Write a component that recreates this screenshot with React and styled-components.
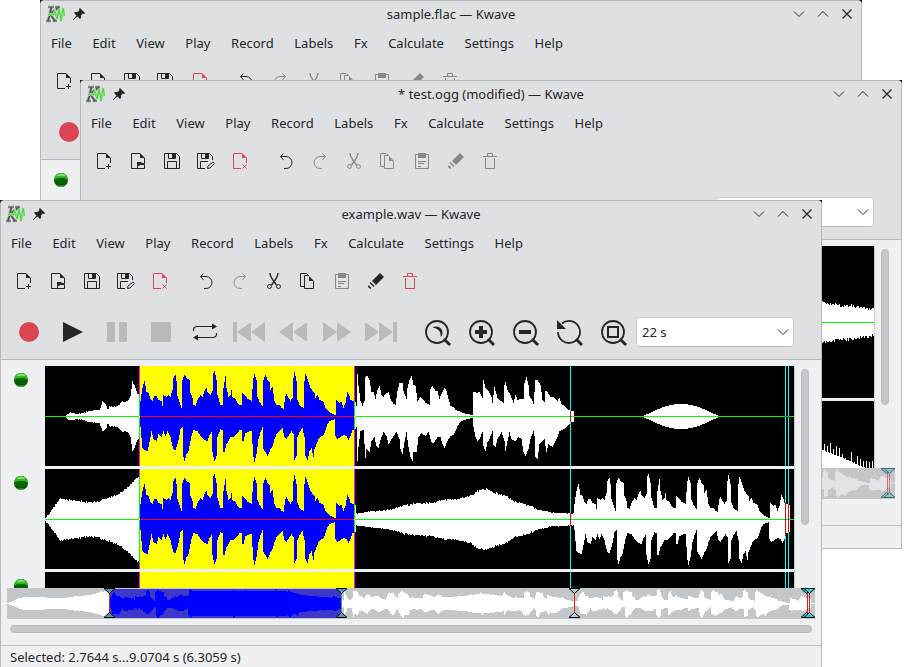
import React from "react";
import styled, { createGlobalStyle } from "styled-components";

const GlobalStyle = createGlobalStyle`
  * {
    box-sizing: border-box;
  }

  body {
    margin: 0;
    background: #ffffff;
    color: #232629;
    font-family: "Noto Sans", sans-serif;
    font-size: 13px;
    overflow: hidden;
  }

  svg {
    display: block;
  }
`;

/* ---------- window frame ---------- */

const Desktop = styled.main`
  position: relative;
  height: 100vh;
  overflow: hidden;
`;

const Window = styled.section`
  position: absolute;
  left: ${(props) => props.$x}px;
  top: ${(props) => props.$y}px;
  width: calc(100% - 84px);
  background: #17191b;
`;

const Frame = styled.div`
  border: 1px solid #b7b8ba;
  border-radius: 4px 4px 0 0;
  background: #eff0f2;
  overflow: hidden;
`;

const TitleBar = styled.header`
  display: grid;
  grid-template-columns: 80px 1fr 80px;
  align-items: center;
  height: 27px;
  padding-bottom: 2px;
  background: #dfe0e2;
`;

const TitleIcons = styled.div`
  display: flex;
  align-items: center;
  gap: 8px;
  padding-left: 4px;
`;

const Title = styled.h1`
  margin: 0;
  font-size: 13px;
  font-weight: 400;
  line-height: 18px;
  text-align: center;
`;

const TitleButtons = styled.div`
  display: flex;
  justify-content: flex-end;
  padding-right: 2px;
`;

const TitleButton = styled.button`
  display: flex;
  align-items: center;
  justify-content: center;
  width: 24px;
  height: 24px;
  padding: 0;
  border: 0;
  background: none;
  color: #232629;
`;

const MenuBar = styled.nav`
  height: 30px;
  background: #dfe0e2;
`;

const MenuList = styled.div`
  display: flex;
  justify-content: space-between;
  width: 532px;
  height: 100%;
`;

const MenuItem = styled.button`
  padding: 0 10px;
  border: 0;
  background: none;
  color: #232629;
  font: inherit;
  line-height: 18px;
`;

const ToolBar = styled.div`
  display: flex;
  align-items: center;
  padding: 6px;
  background: #dfe0e2;
`;

const PlaybackBar = styled(ToolBar)`
  padding-bottom: 5px;
  border-bottom: 1px solid #b7b8ba;
`;

const ToolButton = styled.button`
  display: flex;
  align-items: center;
  justify-content: center;
  flex: none;
  width: ${(props) => props.$size}px;
  height: ${(props) => props.$size}px;
  padding: 0;
  border: 0;
  background: none;
  color: ${(props) => props.$color || "#232629"};
`;

const Separator = styled.span`
  width: 12px;
`;

const ZoomField = styled.label`
  position: relative;
  margin-left: 1px;

  svg {
    position: absolute;
    right: 5px;
    top: 12px;
    pointer-events: none;
  }
`;

const ZoomSelect = styled.select`
  appearance: none;
  display: block;
  width: 158px;
  height: 30px;
  padding: 0 24px 0 5px;
  border: 1px solid #cfd0cf;
  border-bottom-color: #bcbdb9;
  border-radius: 4px;
  background: #ffffff;
  color: #232629;
  font: inherit;
`;

/* ---------- signal area ---------- */

const Signals = styled.div`
  display: flex;
  height: 228px;
  padding-top: 6px;
  overflow: hidden;
`;

const Tracks = styled.div`
  display: flex;
  flex: 1;
  flex-direction: column;
  gap: 3px;
  overflow: hidden;
`;

const Track = styled.div`
  display: flex;
  flex: none;
`;

const TrackHead = styled.div`
  width: 44px;
  padding: 7px 13px;
`;

const TrackView = styled.div`
  flex: 1;
  height: ${(props) => props.$height}px;
  background: #000000;
  isolation: isolate;

  svg {
    width: 100%;
    height: 100%;
  }
`;

const ScrollColumn = styled.div`
  width: 27px;
  padding: 3px 6px;
  border-left: 1px solid #c9cacc;
`;

const Thumb = styled.div`
  height: ${(props) => props.$height}px;
  border: 1px solid #b9babb;
  border-radius: 4px;
  background: #c6c7c9;
`;

const VerticalThumb = styled(Thumb)`
  width: 8px;
`;

const Overview = styled.div`
  height: 31px;
  margin: 0 6px;
  background: #c4c7c9;

  svg {
    width: 100%;
    height: 100%;
  }
`;

const ScrollRow = styled.div`
  height: 26px;
  padding: 6px 9px 0;
`;

const StatusBar = styled.footer`
  height: 23px;
  padding: 2px 9px;
  border-top: 1px solid #c2c3c5;
  line-height: 19px;
`;

/* ---------- wave data: "x amplitude" pairs ---------- */

const pairs = (text) => text.split(",").map((pair) => pair.trim().split(" ").map(Number));

const VOICE_UP = pairs(
  "0 15,2 28,4 35,6 24,8 23,10 17,12 15,14 20,16 20,18 16,21 15,22 10,23 21,26 19,28 21,30 19,32 26,33 38,35 41,36 35,37 20,39 14,41 8,42 36,44 41,47 37,49 36,50 23,52 18,53 11,55 10,57 16,60 21,62 19,64 25,66 28,67 24,70 21,72 25,73 43,74 45,76 36,77 21,80 11,82 11,83 28,85 40,86 28,88 19,90 21,91 26,92 19,95 17,97 13,99 11,101 11,102 23,105 20,107 17,109 16,111 15,113 38,114 42,116 36,117 19,119 14,122 10,123 36,125 41,127 36,129 34,130 26,132 29,134 15,136 11,139 11,141 8,143 7,145 20,146 22,148 18,150 15,152 18,153 38,154 44,156 35,157 16,159 11,161 9,163 8,164 35,165 42,167 37,170 28,172 25,174 23,175 18,177 21,179 16,181 15,183 14,185 8,187 6,189 4,192 2,194 1,195 1,196 16,197 15,199 13,201 14,203 8,205 13,207 24,209 20,210 16,213 15,215 14"
);
const VOICE_DOWN = pairs(
  "0 10,2 31,4 33,7 34,9 25,11 14,13 22,16 24,18 17,21 20,23 14,25 19,27 14,30 20,32 29,33 32,35 33,37 27,39 18,40 12,42 10,43 40,44 44,46 37,48 34,49 29,51 19,53 13,57 14,60 19,62 21,64 23,67 24,69 18,71 15,72 35,74 44,76 39,77 20,80 12,82 13,83 35,84 35,86 27,88 24,90 20,93 20,97 16,99 13,101 13,102 24,103 24,105 16,109 14,111 14,113 40,114 45,116 37,118 22,120 15,122 10,123 32,125 35,127 39,128 37,130 32,132 29,134 22,136 17,139 14,142 11,144 20,146 22,149 17,151 14,153 17,154 43,156 39,157 20,159 15,162 11,164 20,165 39,167 43,169 34,171 31,173 40,174 32,176 27,178 22,180 20,183 18,185 13,187 7,189 4,192 3,194 2,195 19,197 22,200 20,203 18,206 19,208 23,210 19,212 13,215 12"
);
const SPEECH_UP = pairs(
  "0 10,1 42,2 30,4 15,6 10,8 15,9 39,11 40,13 36,15 24,17 24,19 17,21 26,23 30,25 21,27 19,29 22,32 24,34 17,37 12,39 11,41 25,43 33,46 33,47 25,50 17,51 28,53 36,55 40,57 31,59 30,61 15,64 19,67 16,69 13,73 11,74 27,76 30,79 25,81 25,83 17,85 22,88 28,90 25,92 17,94 10,97 9,99 6,102 5,106 3,110 2,116 1,117 24,121 23,123 24,126 18,127 36,129 28,132 25,135 19,136 13,138 29,141 18,143 16,147 13,148 31,149 34,151 26,154 21,157 13,159 21,161 16,164 17,167 17,168 33,170 39,172 31,173 20,176 15,177 12,179 36,181 36,184 31,186 16,188 14,189 25,191 24,194 19,197 19,201 15,203 18,205 12,208 10,211 7,214 5,217 5"
);
const SPEECH_DOWN = pairs(
  "0 10,1 44,2 30,4 14,7 13,9 41,10 32,13 35,15 24,18 20,20 29,22 31,24 23,27 15,30 19,32 27,34 24,37 19,40 15,43 22,44 32,46 37,48 25,50 15,52 30,54 40,56 44,57 35,60 35,62 20,65 16,69 19,72 15,75 25,77 26,81 20,84 20,86 27,88 31,91 24,94 19,97 18,99 14,101 9,104 5,107 3,111 2,116 1,117 10,119 20,121 24,123 22,126 15,127 29,129 34,131 25,133 22,136 14,137 28,139 30,141 22,145 15,148 24,149 34,151 24,153 15,155 22,159 24,162 20,165 22,167 35,169 39,172 32,174 22,177 14,178 19,179 40,181 42,183 27,186 24,188 22,190 35,192 27,196 30,199 24,201 20,203 14,206 13,209 11,213 7,214 5,217 5"
);
const INTRO = pairs(
  "21 1,25 3,31 2,35 2,42 4,48 5,54 6,56 10,57 14,60 12,61 10,62 6,63 6,64 9,70 9,74 11,77 15,79 13,83 15,85 19,86 26,87 34,89 30,92 22,94 21"
);
const RISE = pairs(
  "0 1,3 4,15 20,22 19,32 18,37 17,44 16,52 17,60 20,65 21,70 23,75 26,80 29,84 32,87 36,90 39,94 42"
);
const SWELL = pairs(
  "0 6,14 8,26 9,40 11,48 14,74 16,88 19,100 20,104 21,114 23,121 28,131 30,139 26,150 23,157 18,170 14,181 10,194 7,217 6"
);
const HIDDEN = pairs("168 37,175 39,230 38,262 37,272 26,290 20,309 15");
const DECAY = pairs("0 60,560 34,697 18,714 15,724 15,749 11");
const CLICKS = pairs("0 70,600 52,697 27,715 20,735 11,749 6");

const sample = (points, x) => {
  const last = points.length - 1;
  if (x < points[0][0] || x > points[last][0]) return 0;
  const i = Math.max(1, points.findIndex((point) => point[0] >= x));
  const [x0, a0] = points[i - 1];
  const [x1, a1] = points[i];
  return a0 + ((a1 - a0) * (x - x0)) / (x1 - x0);
};

const rough = (x, size) => Math.abs(Math.sin(x * 127.1) * 43758.5) % 1 * size;

const firstTrack = (x, side) => {
  if (x < 95) return sample(INTRO, x) + (x > 21 ? rough(x + side, 1) : 0);
  if (x < 311) return sample(side ? VOICE_DOWN : VOICE_UP, x - 95);
  if (x < 529) return sample(side ? SPEECH_DOWN : SPEECH_UP, x - 311);
  if (x > 598 && x < 673) return 12 * Math.sin(((x - 598) / 75) * Math.PI);
  return 0;
};

const secondTrack = (x, side) => {
  if (x < 95) return sample(RISE, x) + rough(x + side, 2) - 0.5;
  if (x < 311) return sample(side ? VOICE_DOWN : VOICE_UP, x - 95);
  if (x < 529) return sample(SWELL, x - 311) + rough(x + side * 3, x > 350 && x < 490 ? 2 : 1) - 1;
  return sample(side ? VOICE_DOWN : VOICE_UP, x - 529);
};

const decayTrack = (x, side) => sample(DECAY, x) + rough(x + side * 5, 3);
const clickTrack = (x) => sample(CLICKS, x) + (x % 3 === 0 ? rough(x, 10) : 0);
const silence = () => 0;

const overviewLevel = (column, side) => {
  const x = Math.floor((column * 749) / 808);
  return Math.max(firstTrack(x, side), secondTrack(x, side), sample(HIDDEN, x)) * 0.31;
};

// one step per pixel column, top edge left to right, then the bottom edge back
const wavePath = (level, from, to, middle) => {
  let top = `M${from} ${middle}`;
  let bottom = "";
  for (let x = from; x < to; x += 1) {
    top += `V${middle - Math.round(level(x, 0))}H${x + 1}`;
  }
  for (let x = to - 1; x >= from; x -= 1) {
    const down = Math.round(level(x, 1));
    bottom += `V${middle + (down > 0 ? down + 1 : 0)}H${x}`;
  }
  return `${top}${bottom}Z`;
};

/* ---------- icons ---------- */

const Line = ({ size = 22, children }) => (
  <svg width={size} height={size} viewBox={`0 0 ${size} ${size}`} fill="none" stroke="currentColor">
    {children}
  </svg>
);

const Solid = ({ children }) => (
  <svg width="32" height="32" viewBox="0 0 32 32" fill="currentColor">
    {children}
  </svg>
);

const Page = ({ children }) => (
  <Line>
    <path d="M12 18.5H4.5v-15H13M17.5 8v5" />
    <path d="M13 3l5 5h-5z" fill="currentColor" stroke="none" />
    {children}
  </Line>
);

const NewIcon = () => (
  <Page>
    <path d="M13 16.5h5M15.5 14v5" />
  </Page>
);

const OpenIcon = () => (
  <Page>
    <path d="M10.5 18.5v-5h2l1 1h4v4z" />
    <path d="M10 12h4l1 1h3v1h-4l-2 2h-2z" fill="currentColor" stroke="none" />
  </Page>
);

const SaveIcon = () => (
  <Line>
    <path d="M3.5 3.5h12l3 3v12h-15zM6.5 18.5v-7h9v7M7.5 3.5v5h7v-5" />
    <path d="M11 4h3v4h-3z" fill="currentColor" stroke="none" />
  </Line>
);

const SaveAsIcon = () => (
  <Line>
    <path d="M10 18.5H2.5v-15h12l3 3V10M5.5 18.5v-7H13M6.5 3.5v5h7v-5" />
    <path d="M10 4h3v4h-3z" fill="currentColor" stroke="none" />
    <path d="M12.5 18.5l.5-2.5 5-4 1.5 1.5-4.5 4.5z" />
  </Line>
);

const CloseFileIcon = () => (
  <Page>
    <path d="M13.5 14.5l4 4M17.5 14.5l-4 4" />
  </Page>
);

const UndoIcon = () => (
  <Line>
    <path d="M8.5 3.5l-3 3 3 3.5M5.5 6.5H11a6 6 0 0 1 0 12H9" />
  </Line>
);

const RedoIcon = () => (
  <Line>
    <path d="M13.5 3.5l3 3-3 3.5M16.5 6.5H11a6 6 0 0 0 0 12h2" />
  </Line>
);

const CutIcon = () => (
  <Line>
    <path d="M7 3c0 4 2 6 6.5 12M15 3c0 4-2 6-6.5 12" strokeWidth="1.4" />
    <circle cx="6.5" cy="16.5" r="2" />
    <circle cx="15.5" cy="16.5" r="2" />
  </Line>
);

const CopyIcon = () => (
  <Line>
    <path d="M7 16.5H3.5v-13h6l2 2M7.5 18.5v-13H12M16.5 11v7.5h-9" />
    <path d="M9 3l8 8h-5V6z" fill="currentColor" stroke="none" />
  </Line>
);

const PasteIcon = () => (
  <Line>
    <path d="M4.5 4.5h13v14h-13zM7 11.5h8M7 13.5h6M7 16.5h3" />
    <path d="M7 3h8v5H7z" fill="currentColor" stroke="none" />
  </Line>
);

const EraseIcon = () => (
  <Line>
    <path d="M15 3l4 4-8 8-4-4zM5.5 12l4 4-1 1-4-4zM3.5 15l3 3-1 1-2.5-2z" fill="currentColor" stroke="none" />
  </Line>
);

const DeleteIcon = () => (
  <Line>
    <path d="M4 6.5h14M6.5 8v10.5h9V8M8.5 6V3.5h5V6" />
  </Line>
);

const RecordIcon = () => (
  <Solid>
    <circle cx="16" cy="16" r="10" />
  </Solid>
);

const PlayIcon = () => (
  <Solid>
    <path d="M6 6l20 10L6 26z" />
  </Solid>
);

const PauseIcon = () => (
  <Solid>
    <path d="M6 6h8v20H6zM18 6h8v20h-8z" />
  </Solid>
);

const StopIcon = () => (
  <Solid>
    <path d="M6 6h20v20H6z" />
  </Solid>
);

const LoopIcon = () => (
  <Solid>
    <path d="M4.500 15v-1q0-3.500 4-3.500H24M27.500 17v1q0 3.500-4 3.500H8" fill="none" stroke="currentColor" strokeWidth="1.200" />
    <path d="M23 7.500l5 3-5 3zM9 18.500l-5 3 5 3z" />
  </Solid>
);

const FirstIcon = () => (
  <Solid>
    <path d="M0 6h4v20H0zM18 6v20L4 16zM32 6v20L18 16z" />
  </Solid>
);

const RewindIcon = () => (
  <Solid>
    <path d="M16 6v20L2 16zM30 6v20L16 16z" />
  </Solid>
);

const ForwardIcon = () => (
  <Solid>
    <path d="M2 6v20l14-10zM16 6v20l14-10z" />
  </Solid>
);

const LastIcon = () => (
  <Solid>
    <path d="M28 6h4v20h-4zM0 6v20l14-10zM14 6v20l14-10z" />
  </Solid>
);

const Lens = ({ open, children }) => (
  <Solid>
    {open ? (
      <path d="M5 16a11 11 0 1 0 4-8.500" fill="none" stroke="currentColor" strokeWidth="1.800" />
    ) : (
      <circle cx="16" cy="16" r="11" fill="none" stroke="currentColor" strokeWidth="1.800" />
    )}
    <path d="M23 23l6 6" stroke="currentColor" strokeWidth="2.800" />
    {children}
  </Solid>
);

const ZoomSelectionIcon = () => (
  <Lens>
    <path d="M11.500 11.500c6-3 12 2 9.500 8l-1.500 1.500c1-5-2-8.500-8-9.500z" />
  </Lens>
);

const ZoomInIcon = () => (
  <Lens>
    <path d="M14 10h4v4h4v4h-4v4h-4v-4h-4v-4h4z" />
  </Lens>
);

const ZoomOutIcon = () => (
  <Lens>
    <path d="M10 14h12v4H10z" />
  </Lens>
);

const ZoomResetIcon = () => (
  <Lens open>
    <path d="M4 4l9 9H4z" />
  </Lens>
);

const ZoomAllIcon = () => (
  <Lens>
    <path d="M11 11h10v10H11z" fill="none" stroke="currentColor" strokeWidth="2" />
  </Lens>
);

const Chevron = ({ up }) => (
  <svg width="12" height="6" viewBox="0 0 12 6" fill="none" stroke="currentColor">
    <path d={up ? "M1 5.500l5-5 5 5" : "M1 .5l5 5 5-5"} />
  </svg>
);

const Logo = () => (
  <svg width="20" height="18" viewBox="0 0 20 18" fill="none">
    <path d="M3 2h6M6.500 2L3 16M1 16h5M14 2L5 9M10 2h5M5 9l5 7M8 16h4" stroke="#b5b7b9" strokeWidth="3" />
    <path d="M3 2h6M1 16h5M10 2h5M8 16h4" stroke="#55585a" />
    <path d="M6.500 2L3 16M14 2L5 9l5 7" stroke="#55585a" strokeWidth="1.800" />
    <path d="M3 10l3-1 2 1 2-4 2 8 2-10 2 12 2-13 1.500 8" stroke="#9be292" strokeWidth="2.400" />
    <path d="M3 10l3-1 2 1 2-4 2 8 2-10 2 12 2-13 1.500 8" stroke="#56cf48" />
  </svg>
);

const Pin = () => (
  <svg width="12" height="12" viewBox="0 0 12 12" fill="#232629">
    <path d="M7 0l5 5-1 1-1-.5-2 2v2.500l-1 1-2.500-2.500L.5 12 0 11.500l3.500-4L1 5l1-1h2.500l2-2L6 1z" />
  </svg>
);

const Led = () => (
  <svg width="14" height="14" viewBox="0 0 14 14">
    <circle cx="7" cy="7" r="7" fill="#0a5207" />
    <path d="M0 7a7 7 0 0 1 14 0q-2-2-7-2T0 7z" fill="#2dbb1e" />
    <path d="M3 2q4-3 8 0v1H3z" fill="#7ce06f" />
    <path d="M1 6h12v3q-2 2-6 2T1 9z" fill="#086205" />
    <path d="M4 12q3 1 6 0l-1 2H5z" fill="#35b32a" />
  </svg>
);

const fileTools = [
  ["New", NewIcon],
  ["Open", OpenIcon],
  ["Save", SaveIcon],
  ["Save as", SaveAsIcon],
  ["Close", CloseFileIcon, "#da4453"],
];

const editTools = [
  ["Undo", UndoIcon],
  ["Redo", RedoIcon, "#8d8e90"],
  ["Cut", CutIcon],
  ["Copy", CopyIcon],
  ["Paste", PasteIcon, "#87888a"],
  ["Erase", EraseIcon],
  ["Delete", DeleteIcon, "#da4453"],
];

const playbackTools = [
  ["Record", RecordIcon, "#da4453"],
  ["Play", PlayIcon],
  ["Pause", PauseIcon, "#b9babc"],
  ["Stop", StopIcon, "#b9babc"],
  ["Loop", LoopIcon],
  ["First", FirstIcon, "#b9babc"],
  ["Rewind", RewindIcon, "#b9babc"],
  ["Forward", ForwardIcon, "#b9babc"],
  ["Last", LastIcon, "#b9babc"],
];

const zoomTools = [
  ["Zoom selection", ZoomSelectionIcon],
  ["Zoom in", ZoomInIcon],
  ["Zoom out", ZoomOutIcon],
  ["Zoom 1:1", ZoomResetIcon],
  ["Zoom all", ZoomAllIcon],
];

const menus = ["File", "Edit", "View", "Play", "Record", "Labels", "Fx", "Calculate", "Settings", "Help"];

/* ---------- parts ---------- */

function Tools({ items, size, muted }) {
  return items.map(([name, Icon, color]) => (
    <ToolButton
      key={name}
      type="button"
      aria-label={name}
      $size={size}
      $color={muted && name !== "Undo" ? "#87888a" : color}
    >
      <Icon />
    </ToolButton>
  ));
}

function Wave({ level, height, selected, labels }) {
  const middle = height / 2;
  return (
    <TrackView $height={height}>
      <svg viewBox={`0 0 749 ${height}`} preserveAspectRatio="none" shapeRendering="crispEdges">
        <path d={wavePath(level, 0, 749, middle)} fill="#ffffff" />
        <path d={`M0 ${middle}h749v1H0z`} fill="#00ff00" />
        {selected && (
          <g>
            <path d={`M95 0h214v${height}H95z`} fill="#ffff00" />
            <path d={wavePath(level, 95, 309, middle)} fill="#0000ff" />
            <path d={`M95 ${middle}h214v1H95z`} fill="#ff0000" />
            <path d={`M94 0h1v${height}h-1zM309 0h1v${height}h-1z`} fill="#ff00ff" style={{ mixBlendMode: "difference" }} />
          </g>
        )}
        {labels && (
          <path
            d={`M525 0h1v${height}h-1zM740 0h1v${height}h-1zM743 0h1v${height}h-1z`}
            fill="#00ffff"
            style={{ mixBlendMode: "difference" }}
          />
        )}
      </svg>
    </TrackView>
  );
}

function Marker({ x, fill }) {
  return <path d={`M${x - 5} .5h11l-5.5 5zM${x - 5} 29.5h11l-5.5-5z`} fill={fill} stroke="#000000" />;
}

function OverviewWave({ selected, faded }) {
  return (
    <Overview>
      <svg viewBox="0 0 808 31" preserveAspectRatio="none">
        <g opacity={faded ? 0.5 : 1}>
          <g shapeRendering="crispEdges">
            <path d={wavePath(overviewLevel, 0, 808, 15)} fill="#ffffff" />
            <path d="M0 15h808v1H0z" fill="#ffffff" />
            {selected && (
              <g>
                <path d="M102 1h232v29H102z" fill="#3d38c8" />
                <path d={wavePath(overviewLevel, 102, 334, 15)} fill="#0000ff" />
                <path d="M102 5h1v21h-1z" fill="#e02020" />
                <path d="M334 5h1v21h-1z" fill="#20b070" />
              </g>
            )}
            <path d="M567 5h1v21h-1zM800 4h1v23h-1zM802 4h1v23h-1z" fill="#e01818" />
          </g>
          {selected && <Marker x={102} fill="#5c94a8" />}
          {selected && <Marker x={334} fill="#5c94c0" />}
          <Marker x={567} fill="#a9cfdb" />
          <Marker x={799} fill="#20d0dc" />
          <Marker x={802} fill="#20d0dc" />
        </g>
      </svg>
    </Overview>
  );
}

function KwaveWindow({ x, y, title, tracks, trackHeight, active, status }) {
  return (
    <Window $x={x} $y={y} aria-label={title}>
      <Frame>
        <TitleBar>
          <TitleIcons>
            <Logo />
            <Pin />
          </TitleIcons>
          <Title>{title}</Title>
          <TitleButtons>
            <TitleButton type="button" aria-label="Minimize">
              <Chevron />
            </TitleButton>
            <TitleButton type="button" aria-label="Maximize">
              <Chevron up />
            </TitleButton>
            <TitleButton type="button" aria-label="Close window">
              <Line size={10}>
                <path d="M.5 .5l9 9M9.5 .5l-9 9" strokeWidth="1.200" />
              </Line>
            </TitleButton>
          </TitleButtons>
        </TitleBar>
        <MenuBar>
          <MenuList>
            {menus.map((name) => (
              <MenuItem key={name} type="button">
                {name}
              </MenuItem>
            ))}
          </MenuList>
        </MenuBar>
        <ToolBar>
          <Tools items={fileTools} size={34} />
          <Separator />
          <Tools items={editTools} size={34} muted={!active} />
        </ToolBar>
        <PlaybackBar>
          <Tools items={playbackTools} size={44} />
          <Separator />
          <Tools items={zoomTools} size={44} />
          <ZoomField>
            <ZoomSelect aria-label="Zoom" defaultValue="22 s">
              <option>22 s</option>
            </ZoomSelect>
            <Chevron />
          </ZoomField>
        </PlaybackBar>
        <Signals>
          <Tracks>
            {tracks.map((level, index) => (
              <Track key={index}>
                <TrackHead>
                  <Led />
                </TrackHead>
                <Wave level={level} height={trackHeight} selected={active} labels={active} />
              </Track>
            ))}
          </Tracks>
          <ScrollColumn>
            <VerticalThumb $height={156} />
          </ScrollColumn>
        </Signals>
        <OverviewWave selected={active} faded={!active} />
        <ScrollRow>{active && <Thumb $height={8} />}</ScrollRow>
        <StatusBar>{status}</StatusBar>
      </Frame>
    </Window>
  );
}

function App() {
  return (
    <>
      <GlobalStyle />
      <Desktop>
        <KwaveWindow x={40} y={0} title="sample.flac — Kwave" tracks={[silence, silence]} trackHeight={152} />
        <KwaveWindow
          x={80}
          y={80}
          title="* test.ogg (modified) — Kwave"
          tracks={[decayTrack, clickTrack]}
          trackHeight={152}
        />
        <KwaveWindow
          x={0}
          y={200}
          title="example.wav — Kwave"
          tracks={[firstTrack, secondTrack, silence]}
          trackHeight={100}
          status="Selected: 2.7644 s...9.0704 s (6.3059 s)"
          active
        />
      </Desktop>
    </>
  );
}

export default App;
